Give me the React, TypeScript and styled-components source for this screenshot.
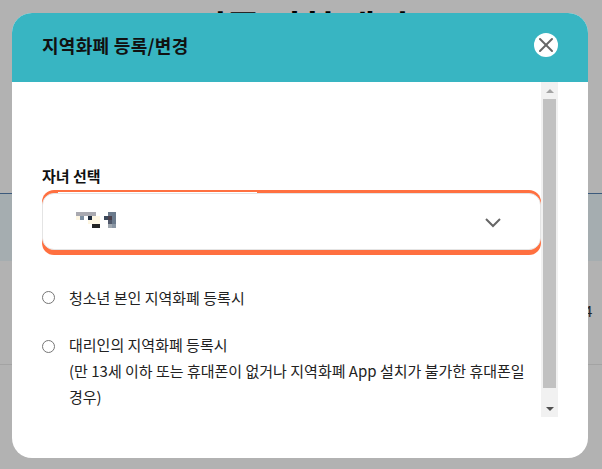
import React from 'react';
import styled, { createGlobalStyle } from 'styled-components';
import { X } from 'lucide-react';

const FONT = `"Noto Sans CJK KR", "Noto Sans", "Liberation Sans", sans-serif`;

const GlobalStyle = createGlobalStyle`
  html, body {
    margin: 0;
    padding: 0;
    width: 602px;
    height: 469px;
    overflow: hidden;
    background: #b2b2b2;
    font-family: ${FONT};
  }
`;

const Page = styled.div`
  position: relative;
  width: 602px;
  height: 469px;
  overflow: hidden;
`;

const PageTitle = styled.div`
  position: absolute;
  top: 1px;
  left: 0;
  width: 602px;
  text-align: center;
  font-size: 36px;
  font-weight: 700;
  line-height: 50px;
  color: #000;
`;

const Band = styled.div`
  position: absolute;
  left: 0;
  top: 193px;
  width: 602px;
  height: 68px;
  background: #a5adb0;
  border-top: 1px solid #3c5a7c;
  box-sizing: border-box;
`;

const Rule = styled.div`
  position: absolute;
  left: 0;
  top: 364px;
  width: 602px;
  height: 1px;
  background: #a3a3a3;
`;

const PageDigit = styled.div`
  position: absolute;
  left: 584px;
  top: 301px;
  font-size: 15px;
  line-height: 20px;
  color: #222;
`;

const Modal = styled.div`
  position: absolute;
  left: 12px;
  top: 13px;
  width: 576px;
  height: 445px;
  background: #fff;
  border-radius: 20px;
  overflow: hidden;
  display: flex;
  flex-direction: column;
`;

const Header = styled.header`
  height: 69px;
  flex: none;
  background: #38b5c2;
  display: flex;
  align-items: center;
  justify-content: space-between;
  padding: 0 30px 5px;
  box-sizing: border-box;
`;

const Title = styled.h2`
  margin: 0;
  font-size: 18px;
  font-weight: 700;
  color: #111;
  letter-spacing: 0.3px;
`;

const CloseButton = styled.button`
  width: 24px;
  height: 24px;
  padding: 0;
  border: 0;
  border-radius: 50%;
  background: #fff;
  color: #666;
  display: flex;
  align-items: center;
  justify-content: center;
`;

const BodyRow = styled.div`
  display: flex;
  align-items: flex-start;
`;

const Content = styled.div`
  width: 529px;
  flex: none;
  padding: 84px 0 0 30px;
  box-sizing: border-box;
`;

const FieldLabel = styled.div`
  font-size: 15px;
  font-weight: 700;
  line-height: 20px;
  color: #111;
`;

const FocusRing = styled.div`
  position: relative;
  margin-top: 4px;
  width: 499px;
  height: 65px;
  box-sizing: border-box;
  padding: 3px 0 5px;
  background: #ff7040;
  border-radius: 12px;

  &::before {
    content: '';
    position: absolute;
    left: 16px;
    top: 2px;
    width: 199px;
    height: 1px;
    background: #fff;
  }
`;

const Select = styled.div`
  height: 100%;
  box-sizing: border-box;
  background: #fff;
  border: 1px solid #e4e4e4;
  border-radius: 12px;
  display: flex;
  align-items: center;
  justify-content: space-between;
  padding: 0 39px 0 33px;
`;

const Blur = styled.div`
  display: grid;
  grid-template-columns: repeat(10, 4px);
  grid-auto-rows: 4px;
  margin-bottom: 3px;
`;

const Pixel = styled.span<{ $c: string }>`
  background: ${({ $c }) => $c};
`;

const Chevron = styled.svg`
  display: block;
  width: 16px;
  height: 10px;
  margin-top: 2px;
  fill: none;
  stroke: #666;
  stroke-width: 2;
`;

const Options = styled.div`
  margin-top: 30px;
  display: flex;
  flex-direction: column;
  gap: 21px;
`;

const Option = styled.label`
  display: flex;
  align-items: flex-start;
  gap: 14px;
  font-size: 15px;
  line-height: 26px;
  color: #222;
`;

const Radio = styled.span<{ $top: number }>`
  flex: none;
  width: 11px;
  height: 11px;
  margin-top: ${({ $top }) => $top}px;
  border: 1px solid #767676;
  border-radius: 50%;
  background: #fff;
`;

const Scrollbar = styled.div`
  width: 17px;
  height: 335px;
  flex: none;
  background: #f1f1f1;
  display: flex;
  flex-direction: column;
  align-items: center;
`;

const Arrow = styled.div<{ $down?: boolean }>`
  width: 17px;
  height: 17px;
  flex: none;
  display: flex;
  align-items: center;
  justify-content: center;
  &::after {
    content: '';
    border-left: 4px solid transparent;
    border-right: 4px solid transparent;
    ${({ $down }) => ($down ? 'border-top: 4px solid #505050;' : 'border-bottom: 4px solid #a3a3a3;')}
  }
`;

const Thumb = styled.div`
  width: 13px;
  height: 289px;
  background: #c1c1c1;
  flex: none;
`;

const Track = styled.div`
  flex: 1;
`;

const W = '#fff';
const C = '#fdf6e3';
const G = '#a9a9b0';
const S = '#6b7a8c';
const N = '#1c2a3c';
const PIXELS = [
  G, G, G, G, G, W, W, W, S, S,
  C, '#7c8ea0', W, N, C, C, W, '#3c4a5c', '#4a3f4a', S,
  W, W, W, C, C, C, W, W, '#50586a', S,
  W, W, W, W, '#222', '#222', W, W, '#a0a8b0', '#8a96a4',
];

export default function App() {
  return (
    <Page>
      <GlobalStyle />
      <PageTitle>기존 신청 내역</PageTitle>
      <Band />
      <Rule />
      <PageDigit>4</PageDigit>
      <Modal>
        <Header>
          <Title>지역화폐 등록/변경</Title>
          <CloseButton aria-label="닫기">
            <X size={24} strokeWidth={2} />
          </CloseButton>
        </Header>
        <BodyRow>
          <Content>
            <FieldLabel>자녀 선택</FieldLabel>
            <FocusRing>
              <Select>
                <Blur>
                  {PIXELS.map((c, i) => (
                    <Pixel key={i} $c={c} />
                  ))}
                </Blur>
                <Chevron viewBox="0 0 16 10">
                  <polyline points="1,1 8,8 15,1" />
                </Chevron>
              </Select>
            </FocusRing>
            <Options>
              <Option>
                <Radio $top={6} />
                <span>청소년 본인 지역화폐 등록시</span>
              </Option>
              <Option>
                <Radio $top={8} />
                <span>
                  대리인의 지역화폐 등록시
                  <br />
                  (만 13세 이하 또는 휴대폰이 없거나 지역화폐 App 설치가 불가한 휴대폰일 경우)
                </span>
              </Option>
            </Options>
          </Content>
          <Scrollbar>
            <Arrow />
            <Thumb />
            <Track />
            <Arrow $down />
          </Scrollbar>
        </BodyRow>
      </Modal>
    </Page>
  );
}
